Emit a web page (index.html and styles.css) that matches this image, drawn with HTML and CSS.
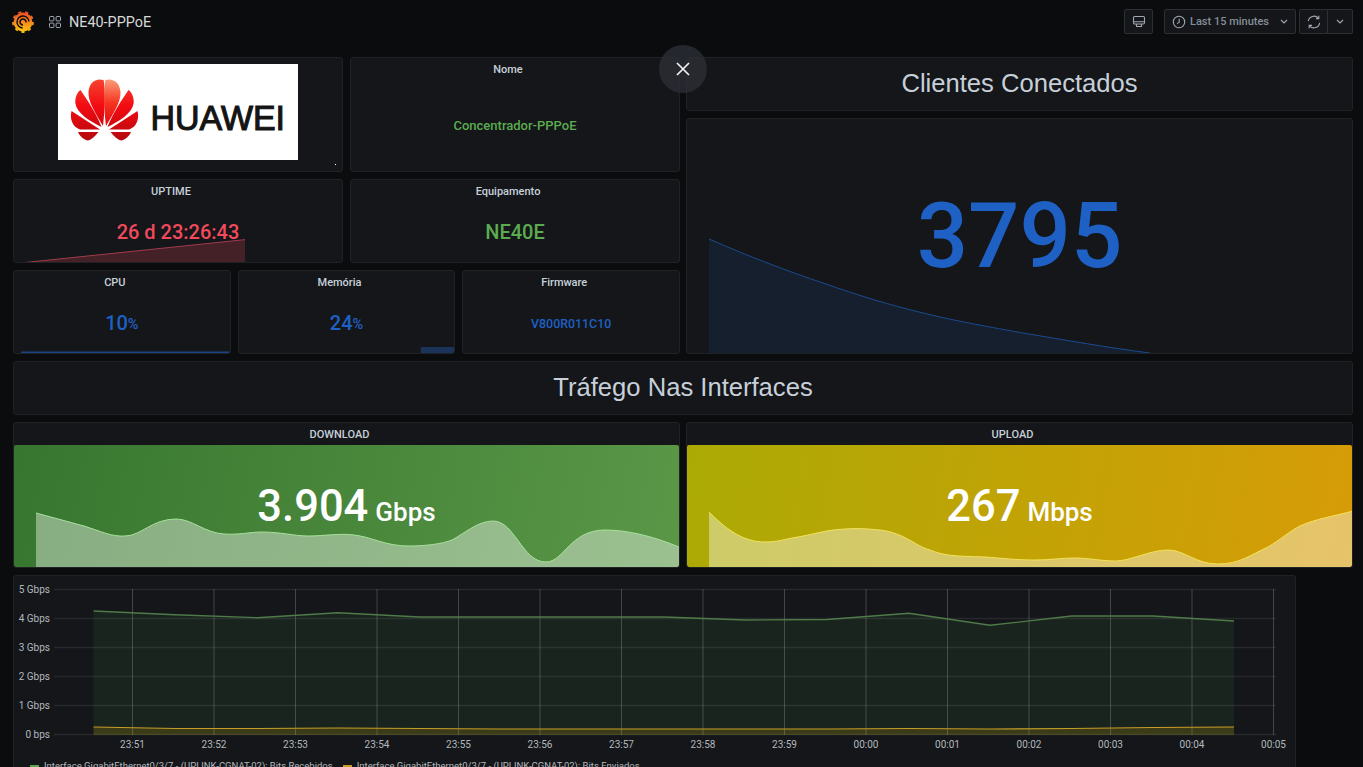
FILE: index.html
```html
<!DOCTYPE html>
<html lang="pt-br">

<head>
    <meta charset="UTF-8">
    <meta name="viewport" content="width=device-width, initial-scale=1.0">
    <title>NE40-PPPoE</title>
    <link rel="stylesheet" href="styles.css">
</head>

<body>
    <!-- Barra superior -->
    <header class="topbar">
        <svg class="logo-grafana" viewBox="0 0 24 26">
            <defs>
                <linearGradient id="gradGrafana" x1="0" y1="1" x2="0" y2="0">
                    <stop offset="0" stop-color="#fcc30f" />
                    <stop offset="1" stop-color="#ef4f27" />
                </linearGradient>
            </defs>
            <circle cx="12" cy="13" r="9.4" fill="url(#gradGrafana)" />
            <circle cx="12" cy="13" r="10" fill="none" stroke="url(#gradGrafana)" stroke-width="1.8" stroke-dasharray="3.2 3.8" />
            <path d="M18 12.4a6 6 0 1 0-6.4 6.6" fill="none" stroke="#0b0c0e" stroke-width="1.4" />
            <path d="M15 13.4a3 3 0 1 0-3 2.6" fill="none" stroke="#0b0c0e" stroke-width="1.6" />
        </svg>
        <svg class="icon-grid" viewBox="0 0 12 12">
            <rect x="0.5" y="0.5" width="4.4" height="4.4" rx="0.8" />
            <rect x="7.1" y="0.5" width="4.4" height="4.4" rx="0.8" />
            <rect x="0.5" y="7.1" width="4.4" height="4.4" rx="0.8" />
            <rect x="7.1" y="7.1" width="4.4" height="4.4" rx="0.8" />
        </svg>
        <span class="dash-name">NE40-PPPoE</span>

        <div class="top-actions">
            <button class="btn btn-tv">
                <svg class="icon" viewBox="0 0 14 14">
                    <rect x="1.5" y="1.5" width="11" height="7.5" rx="1.2" />
                    <path d="M1.5 6.8h11M4.5 9v2.5h5V9" />
                </svg>
            </button>
            <button class="btn btn-time">
                <svg class="icon" viewBox="0 0 14 14">
                    <circle cx="7" cy="7" r="5.7" />
                    <path d="M7.2 3.8V7.3L5 8.6" />
                </svg>
                <span>Last 15 minutes</span>
                <svg class="chevron" viewBox="0 0 8 5">
                    <path d="M1 1l3 3 3-3" />
                </svg>
            </button>
            <div class="btn-group">
                <button class="btn btn-refresh">
                    <svg class="icon" viewBox="0 0 14 14">
                        <path d="M1.3 6.2A5.8 5.8 0 0 1 11.4 3.2M12.7 7.8A5.8 5.8 0 0 1 2.6 10.8" />
                        <path d="M11.8 0.8V3.6H9M2.2 13.2V10.4H5" />
                    </svg>
                </button>
                <button class="btn btn-more">
                    <svg class="chevron" viewBox="0 0 8 5">
                        <path d="M1 1l3 3 3-3" />
                    </svg>
                </button>
            </div>
        </div>
    </header>

    <!-- Botão de sair do modo quiosque -->
    <button class="btn-close">
        <svg viewBox="0 0 14 14">
            <path d="M1 1l12 12M13 1L1 13" />
        </svg>
    </button>

    <main class="dash">
        <section class="top-grid">
            <div class="col">
                <div class="row row-a">
                    <div class="panel panel-logo">
                        <svg class="huawei" viewBox="58 64 240 96">
                            <defs>
                                <linearGradient id="gradPetal" gradientUnits="userSpaceOnUse" x1="0" y1="80" x2="0" y2="140">
                                    <stop offset="0" stop-color="#f8402e" />
                                    <stop offset="0.45" stop-color="#f20a12" />
                                    <stop offset="1" stop-color="#b50a0e" />
                                </linearGradient>
                                <linearGradient id="gradPetalTop" gradientUnits="userSpaceOnUse" x1="0" y1="80" x2="0" y2="126">
                                    <stop offset="0" stop-color="#fb9a78" />
                                    <stop offset="0.5" stop-color="#f5341f" />
                                    <stop offset="1" stop-color="#e30a10" />
                                </linearGradient>
                                <path id="petalaTopo" d="M103 126C95 112 88 102 88.5 92C89 85 93 80 99 79.5L103.6 80C105.5 90 105 110 103 126Z" />
                                <g id="petalas">
                                    <path d="M101.5 127C90 121 77 114 75.3 103C75 98 77 92 80.5 90C88 101 96 113 101.5 127Z" />
                                    <path d="M100 129.5L71.5 111C69.5 119 72.5 127 80 129.5Z" />
                                    <path d="M98.5 132H78C80 136.5 84 140 88 140.5C92 139.5 95.5 135.5 98.5 132Z" />
                                </g>
                            </defs>
                            <rect x="58" y="64" width="240" height="96" fill="#fff" />
                            <use href="#petalaTopo" fill="url(#gradPetal)" />
                            <use href="#petalas" fill="url(#gradPetal)" />
                            <use href="#petalaTopo" fill="url(#gradPetalTop)" transform="matrix(-1 0 0 1 209 0)" />
                            <use href="#petalas" fill="url(#gradPetal)" transform="matrix(-1 0 0 1 209 0)" />
                            <text class="huawei-text" x="150.5" y="130" textLength="134.5" lengthAdjust="spacingAndGlyphs">HUAWEI</text>
                        </svg>
                        <span class="logo-dot"></span>
                    </div>
                    <div class="panel">
                        <div class="panel-title">Nome</div>
                        <div class="panel-value value-small text-green">Concentrador-PPPoE</div>
                    </div>
                </div>
                <div class="row row-b">
                    <div class="panel">
                        <svg class="spark" viewBox="14 179 328 83" preserveAspectRatio="none">
                            <path class="area-red" d="M25 262L245 239V262Z" />
                            <path class="line-red" d="M25 262L245 239" />
                        </svg>
                        <div class="panel-title">UPTIME</div>
                        <div class="panel-value value-mid text-red">26 d 23:26:43</div>
                    </div>
                    <div class="panel">
                        <div class="panel-title">Equipamento</div>
                        <div class="panel-value value-mid text-green">NE40E</div>
                    </div>
                </div>
                <div class="row row-c">
                    <div class="panel">
                        <svg class="spark" viewBox="14 271 216 82" preserveAspectRatio="none">
                            <path class="bar-blue" d="M21 351.5H230V353H21Z" />
                        </svg>
                        <div class="panel-title">CPU</div>
                        <div class="panel-value value-mid text-blue">10<small>%</small></div>
                    </div>
                    <div class="panel">
                        <svg class="spark" viewBox="239 271 216 82" preserveAspectRatio="none">
                            <path class="area-mem" d="M421 347H455V353H421Z" />
                        </svg>
                        <div class="panel-title">Memória</div>
                        <div class="panel-value value-mid text-blue">24<small>%</small></div>
                    </div>
                    <div class="panel">
                        <div class="panel-title">Firmware</div>
                        <div class="panel-value value-firmware text-blue">V800R011C10</div>
                    </div>
                </div>
            </div>
            <div class="col">
                <div class="panel panel-heading">Clientes Conectados</div>
                <div class="panel panel-clientes">
                    <svg class="spark" viewBox="687 119 665 234" preserveAspectRatio="none">
                        <path class="area-blue" d="M709 239C750 257 790 272 823 283C860 296 890 305 923 313C960 322 990 327 1023 333C1065 340 1110 348 1150 353H709Z" />
                        <path class="line-blue" d="M709 239C750 257 790 272 823 283C860 296 890 305 923 313C960 322 990 327 1023 333C1065 340 1110 348 1150 353" />
                    </svg>
                    <div class="panel-value value-big text-blue">3795</div>
                </div>
            </div>
        </section>

        <div class="panel panel-heading">Tráfego Nas Interfaces</div>

        <!-- Download e upload -->
        <section class="top-grid">
            <div class="panel panel-stat">
                <div class="panel-title">DOWNLOAD</div>
                <div class="stat-box stat-green">
                    <svg class="spark" viewBox="14 445 665 122" preserveAspectRatio="none">
                        <path class="area-white" d="M36 513L84 526C100 531 112 537 125 536C141 536 152 519 176 519C192 519 205 533 224 534C240 535 250 532 262 532C280 532 295 536 308 536C325 536 340 533 354 535C372 537 385 546 409 546C425 546 442 544 452 540C465 533 478 521 493 521C515 521 522 562 546 562C564 562 570 530 605 530C625 530 650 535 679 547V567H36Z" />
                        <path class="line-lightgreen" d="M36 513L84 526C100 531 112 537 125 536C141 536 152 519 176 519C192 519 205 533 224 534C240 535 250 532 262 532C280 532 295 536 308 536C325 536 340 533 354 535C372 537 385 546 409 546C425 546 442 544 452 540C465 533 478 521 493 521C515 521 522 562 546 562C564 562 570 530 605 530C625 530 650 535 679 547" />
                    </svg>
                    <div class="stat-value">3.904<small>Gbps</small></div>
                </div>
            </div>
            <div class="panel panel-stat">
                <div class="panel-title">UPLOAD</div>
                <div class="stat-box stat-yellow">
                    <svg class="spark" viewBox="687 445 665 122" preserveAspectRatio="none">
                        <path class="area-white" d="M709 512C725 528 742 542 765 542C778 542 785 539 798 537C815 534 825 530 845 529C860 528 868 529 880 530C905 533 915 546 930 550C945 556 955 556 985 557C1000 558 1015 560 1035 560C1050 560 1060 558 1075 558C1090 558 1100 561 1116 561C1130 561 1150 550 1168 550C1185 550 1195 564 1218 564C1240 564 1250 555 1268 547C1280 540 1290 531 1300 526C1315 519 1335 516 1353 511V567H709Z" />
                        <path class="line-lightyellow" d="M709 512C725 528 742 542 765 542C778 542 785 539 798 537C815 534 825 530 845 529C860 528 868 529 880 530C905 533 915 546 930 550C945 556 955 556 985 557C1000 558 1015 560 1035 560C1050 560 1060 558 1075 558C1090 558 1100 561 1116 561C1130 561 1150 550 1168 550C1185 550 1195 564 1218 564C1240 564 1250 555 1268 547C1280 540 1290 531 1300 526C1315 519 1335 516 1353 511" />
                    </svg>
                    <div class="stat-value">267<small>Mbps</small></div>
                </div>
            </div>
        </section>

        <!-- Gráfico de tráfego -->
        <section class="panel panel-graph">
            <svg class="graph" viewBox="14 575 1281 183">
                <g class="grid-lines">
                    <path d="M54 588.5H1276M54 617.5H1276M54 646.5H1276M54 675.5H1276M54 704.5H1276M54 733.5H1276" />
                    <path d="M132.5 588V734M214 588V734M295.5 588V734M377 588V734M458.5 588V734M540 588V734M621.5 588V734M703 588V734M784.5 588V734M866 588V734M947.5 588V734M1029 588V734M1110.5 588V734M1192 588V734M1273.5 588V734" />
                </g>
                <path class="area-green" d="M93.5 610L175 613.7L257 616.7L338 611.7L419.5 616L501 616L582.5 616L664 616L745.5 619L827 618.5L909 612.3L990 624.3L1071.5 615L1153 615L1234 620V734H93.5Z" />
                <path class="line-green" d="M93.5 610L175 613.7L257 616.7L338 611.7L419.5 616L501 616L582.5 616L664 616L745.5 619L827 618.5L909 612.3L990 624.3L1071.5 615L1153 615L1234 620" />
                <path class="area-yellow" d="M93.5 726L175 727.5L257 727.5L338 727L419.5 727.5L501 728L582.5 728L664 728L745.5 728L827 728L909 727.5L990 728L1071.5 727.5L1153 726.5L1234 726V734H93.5Z" />
                <path class="line-yellow" d="M93.5 726L175 727.5L257 727.5L338 727L419.5 727.5L501 728L582.5 728L664 728L745.5 728L827 728L909 727.5L990 728L1071.5 727.5L1153 726.5L1234 726" />
                <g class="axis-y">
                    <text x="50" y="592">5 Gbps</text>
                    <text x="50" y="621">4 Gbps</text>
                    <text x="50" y="650">3 Gbps</text>
                    <text x="50" y="679">2 Gbps</text>
                    <text x="50" y="708">1 Gbps</text>
                    <text x="50" y="737">0 bps</text>
                </g>
                <g class="axis-x">
                    <text x="132.5" y="747">23:51</text>
                    <text x="214" y="747">23:52</text>
                    <text x="295.5" y="747">23:53</text>
                    <text x="377" y="747">23:54</text>
                    <text x="458.5" y="747">23:55</text>
                    <text x="540" y="747">23:56</text>
                    <text x="621.5" y="747">23:57</text>
                    <text x="703" y="747">23:58</text>
                    <text x="784.5" y="747">23:59</text>
                    <text x="866" y="747">00:00</text>
                    <text x="947.5" y="747">00:01</text>
                    <text x="1029" y="747">00:02</text>
                    <text x="1110.5" y="747">00:03</text>
                    <text x="1192" y="747">00:04</text>
                    <text x="1273.5" y="747">00:05</text>
                </g>
            </svg>
            <div class="legend">
                <span class="legend-item"><i class="dash-green"></i>Interface GigabitEthernet0/3/7 - (UPLINK-CGNAT-02): Bits Recebidos</span>
                <span class="legend-item"><i class="dash-yellow"></i>Interface GigabitEthernet0/3/7 - (UPLINK-CGNAT-02): Bits Enviados</span>
            </div>
        </section>
    </main>
</body>

</html>
```

FILE: styles.css
```css
html,
body {
    height: 767px;
    overflow: hidden;
}

body {
    margin: 0;
    background-color: #0b0c0e;
    color: #c7d0d9;
    font-family: Roboto, "Liberation Sans", sans-serif;
    position: relative;
}

/* Barra superior */
.topbar {
    height: 43px;
    padding: 0 10px 14px 11px;
    display: flex;
    align-items: center;
}

.logo-grafana {
    width: 24px;
    height: 26px;
    margin-right: 14px;
}

.icon-grid {
    width: 12px;
    height: 12px;
    margin-right: 8px;
    fill: none;
    stroke: #9fa7b3;
    stroke-width: 1;
}

.dash-name {
    margin-top: 1px;
    font-size: 14.4px;
    color: #d8d9da;
}

.top-actions {
    margin-left: auto;
    display: flex;
    align-items: center;
}

.btn {
    height: 25px;
    padding: 0;
    display: flex;
    align-items: center;
    justify-content: center;
    background-color: #141619;
    border: 1px solid #2c3035;
    border-radius: 2px;
    color: #858f9a;
    font-family: inherit;
}

.icon {
    width: 14px;
    height: 14px;
    fill: none;
    stroke: #9fa7b3;
    stroke-width: 1.1;
}

.chevron {
    width: 8px;
    height: 5px;
    fill: none;
    stroke: #9fa7b3;
    stroke-width: 1.1;
}

.btn-tv {
    width: 29px;
    margin-right: 11px;
}

.btn-time {
    width: 132px;
    margin-right: 3px;
    padding: 0 7px;
    justify-content: flex-start;
    font-size: 11px;
    font-weight: 500;
}

.btn-time span {
    margin: 0 auto 0 4px;
}

.btn-group {
    display: flex;
}

.btn-refresh {
    width: 29px;
    border-radius: 2px 0 0 2px;
}

.btn-more {
    width: 25px;
    border-left: 0;
    border-radius: 0 2px 2px 0;
}

.btn-close {
    position: absolute;
    top: 45px;
    left: 659px;
    z-index: 5;
    width: 48px;
    height: 48px;
    padding: 0;
    display: flex;
    align-items: center;
    justify-content: center;
    border: none;
    border-radius: 50%;
    background-color: rgba(42, 45, 52, 0.85);
}

.btn-close svg {
    width: 14px;
    height: 14px;
    fill: none;
    stroke: #f0f1f3;
    stroke-width: 1.7;
}

/* Grade do painel */
.dash {
    padding: 0 10px 0 13px;
    display: flex;
    flex-direction: column;
    gap: 7px;
}

.top-grid {
    display: grid;
    grid-template-columns: 667px 667px;
    gap: 7px 6px;
}

.col {
    display: flex;
    flex-direction: column;
    gap: 7px;
    min-width: 0;
}

.row {
    display: flex;
    gap: 7px;
}

.row > .panel {
    flex: 1 1 0;
    min-width: 0;
}

.row-a {
    height: 114.5px;
}

.row-b {
    height: 84.5px;
}

.row-c {
    height: 84px;
}

.panel {
    position: relative;
    box-sizing: border-box;
    display: flex;
    flex-direction: column;
    overflow: hidden;
    background-color: #141619;
    border: 1px solid #202226;
    border-radius: 3px;
}

.panel-title {
    position: relative;
    flex: none;
    height: 22px;
    padding: 4px 14px 0 0;
    box-sizing: border-box;
    text-align: center;
    font-size: 11px;
    font-weight: 500;
    line-height: 16px;
    color: #c7d0d9;
}

.panel-value {
    position: relative;
    flex: 1;
    display: flex;
    align-items: center;
    justify-content: center;
    font-weight: 500;
    white-space: nowrap;
}

.panel-value small {
    font-size: 14.5px;
    padding-top: 3px;
}

.value-small {
    font-size: 13px;
}

.value-mid {
    font-size: 20px;
}

.value-firmware {
    font-size: 12.4px;
}

.value-big {
    font-size: 90.5px;
}

.text-green {
    color: #5cab50;
}

.text-red {
    color: #f2495c;
}

.text-blue {
    color: #1f60c4;
}

.panel-heading {
    height: 54px;
    padding-bottom: 2px;
    align-items: center;
    justify-content: center;
    font-family: "Liberation Sans", Arial, sans-serif;
    font-size: 25.6px;
}

.panel-clientes {
    height: 236px;
}

/* Logo */
.huawei {
    display: block;
    flex: none;
    width: 240px;
    height: 96px;
    margin: 6px 0 0 44px;
}

.huawei-text {
    font-family: "Liberation Sans", Arial, sans-serif;
    font-size: 35px;
    fill: #141414;
    stroke: #141414;
    stroke-width: 1.1;
}

.logo-dot {
    position: absolute;
    left: 321px;
    bottom: 6px;
    width: 1px;
    height: 1px;
    background-color: #fff;
}

/* Sparklines */
.spark {
    position: absolute;
    left: 0;
    top: 0;
    width: 100%;
    height: 100%;
}

.area-red {
    fill: rgba(242, 73, 92, 0.22);
}

.line-red {
    fill: none;
    stroke: #a23c4b;
    stroke-width: 1;
}

.area-blue {
    fill: rgba(31, 96, 196, 0.13);
}

.line-blue {
    fill: none;
    stroke: #1a4a90;
    stroke-width: 1;
}

.bar-blue {
    fill: #1b4484;
}

.area-mem {
    fill: #1b3358;
}

/* Download e upload */
.panel-stat {
    height: 146px;
}

.stat-box {
    position: relative;
    flex: 1;
    display: flex;
    align-items: center;
    justify-content: center;
    border-radius: 2px;
}

.stat-green {
    background: linear-gradient(100deg, #37762f, #5a9747);
}

.stat-yellow {
    background: linear-gradient(100deg, #abaa05, #d79c07);
}

.area-white {
    fill: rgba(255, 255, 255, 0.4);
}

.line-lightgreen {
    fill: none;
    stroke: #a9e09d;
    stroke-width: 1;
}

.line-lightyellow {
    fill: none;
    stroke: #f5e25a;
    stroke-width: 1;
}

.stat-value {
    position: relative;
    color: #fff;
    font-size: 43.5px;
    font-weight: 500;
    white-space: nowrap;
}

.stat-value small {
    margin-left: 7px;
    font-size: 26px;
}

/* Gráfico */
.panel-graph {
    width: 1283px;
    height: 220px;
}

.graph {
    display: block;
    width: 1281px;
    height: 183px;
    flex: none;
}

.grid-lines path {
    fill: none;
    stroke: rgba(255, 255, 255, 0.08);
    stroke-width: 1.6;
}

.grid-lines path + path {
    stroke: rgba(255, 255, 255, 0.2);
    stroke-width: 1;
}

.area-green {
    fill: rgba(86, 166, 75, 0.1);
}

.line-green {
    fill: none;
    stroke: #4f7a49;
    stroke-width: 1.4;
}

.area-yellow {
    fill: rgba(224, 180, 0, 0.17);
}

.line-yellow {
    fill: none;
    stroke: #c69d26;
    stroke-width: 1.2;
}

.axis-y text,
.axis-x text {
    font-size: 10px;
    fill: #b3b8bd;
}

.axis-y text {
    text-anchor: end;
}

.axis-x text {
    text-anchor: middle;
}

.legend {
    padding: 0 0 0 16px;
    display: flex;
    gap: 10px;
    font-size: 9.5px;
    line-height: 14px;
    color: #b3b8bd;
    white-space: nowrap;
}

.legend-item {
    display: flex;
    align-items: center;
}

.legend-item i {
    width: 9px;
    height: 2px;
    margin-right: 5px;
}

.dash-green {
    background-color: #56a64b;
}

.dash-yellow {
    background-color: #c69d26;
}
```
